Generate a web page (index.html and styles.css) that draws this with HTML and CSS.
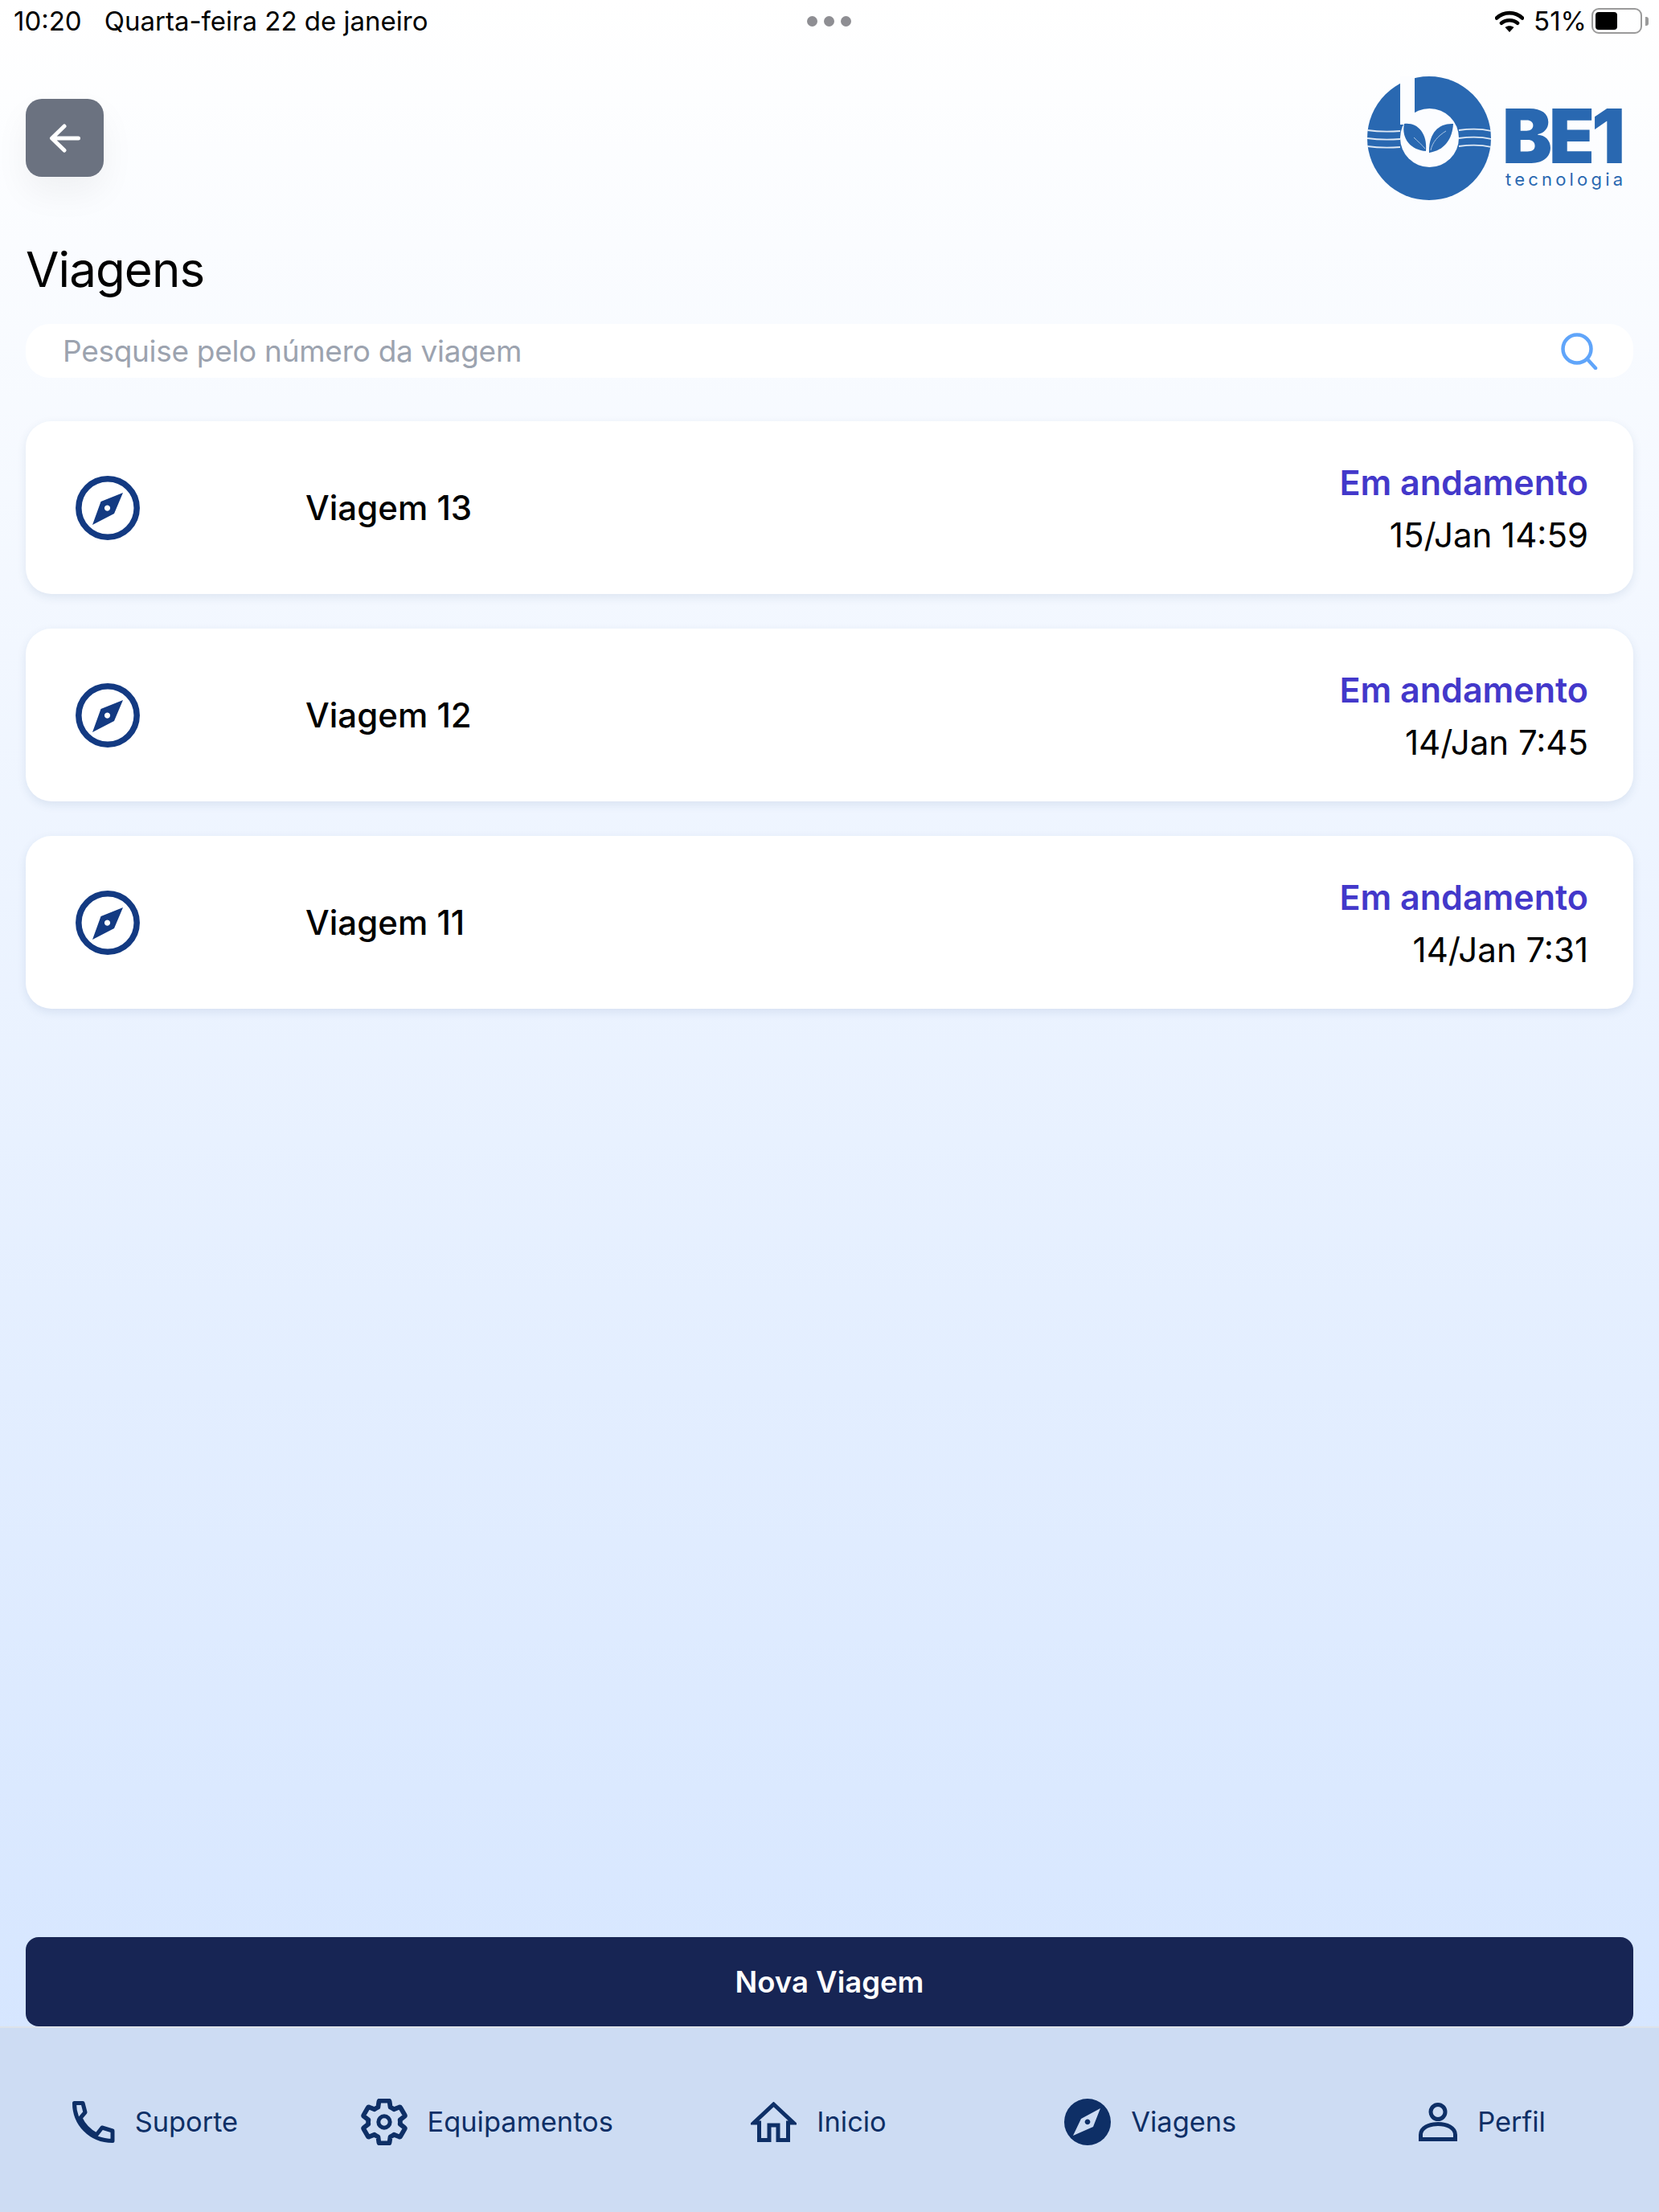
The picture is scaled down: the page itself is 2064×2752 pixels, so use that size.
FILE: index.html
```html
<!DOCTYPE html>
<html lang="pt-BR">
<head>
  <meta charset="UTF-8" />
  <title>Viagens</title>
  <link rel="stylesheet" href="styles.css">
</head>
<body>
  <div class="app">

    <div class="status-bar">
      <div class="status-left">
        <span>10:20</span>
        <span>Quarta-feira 22 de janeiro</span>
      </div>
      <div class="status-dots"><i></i><i></i><i></i></div>
      <div class="status-right">
        <svg class="wifi" viewBox="0 0 36 27">
          <path d="M2 9.5C11 1 25 1 34 9.5M8 15.8C13.5 11 22.5 11 28 15.8" fill="none" stroke="#000" stroke-width="4.6" stroke-linecap="round"/>
          <path d="M12.5 21C15.5 18.6 20.5 18.6 23.5 21L18 27Z" fill="#000"/>
        </svg>
        <span class="percent">51%</span>
        <div class="battery"><div class="battery-level"></div></div>
        <div class="battery-nub"></div>
      </div>
    </div>

    <header class="top">
      <button class="back-btn">
        <svg viewBox="0 0 40 36" width="40" height="36">
          <path d="M36.5 18H4M19 3L3.5 18L19 33" fill="none" stroke="#fff" stroke-width="5" stroke-linecap="round" stroke-linejoin="round"/>
        </svg>
      </button>
      <div class="logo">
        <svg class="logo-mark" viewBox="0 0 154 154">
          <circle cx="77" cy="77" r="77" fill="#2968b1"/>
          <path d="M0 67C14 69 28 69 41 68M0 77C14 79 28 79 41 78M0 87C14 89 28 89 41 88M114 67C128 65 142 65 154 68M114 77C128 75 142 75 154 78M114 87C128 85 142 85 154 88" fill="none" stroke="#dfe9f5" stroke-width="1.8"/>
          <rect x="41" y="0" width="18" height="60" fill="#fcfdff"/>
          <circle cx="77.5" cy="76.5" r="36.5" fill="#fcfdff"/>
          <path d="M46 59C62 57 75 70 73 93C55 92 42 78 46 59Z" fill="#2968b1"/>
          <path d="M107 59C88 58 76 72 77 95C96 92 106 78 107 59Z" fill="#2968b1"/>
          <path d="M58 76C63 81 68 85 72 90M98 68C88 74 81 82 79 92" fill="none" stroke="#a9c5e4" stroke-width="1"/>
        </svg>
        <div class="logo-text">
          <div class="logo-name">BE1</div>
          <div class="logo-sub">tecnologia</div>
        </div>
      </div>
    </header>

    <h1 class="title">Viagens</h1>

    <div class="search">
      <span class="search-text">Pesquise pelo número da viagem</span>
      <svg viewBox="0 0 46 46" width="46" height="46">
        <circle cx="20" cy="20" r="17.5" fill="none" stroke="#60a5fa" stroke-width="4.5"/>
        <path d="M33 33L43 44" fill="none" stroke="#60a5fa" stroke-width="4.5" stroke-linecap="round"/>
      </svg>
    </div>

    <main class="trip-list">
      <div class="trip-card">
        <svg class="trip-icon" viewBox="0 0 80 80">
          <circle cx="40" cy="40" r="36.2" fill="none" stroke="#133a82" stroke-width="7.5"/>
          <path fill-rule="evenodd" d="M59 21L31.5 32L21 61L48 47ZM39.5 36.5a3.6 3.6 0 1 0 0.01 0Z" fill="#133a82"/>
        </svg>
        <div class="trip-name">Viagem 13</div>
        <div class="trip-meta">
          <div class="trip-status">Em andamento</div>
          <div class="trip-date">15/Jan 14:59</div>
        </div>
      </div>
      <div class="trip-card">
        <svg class="trip-icon" viewBox="0 0 80 80">
          <circle cx="40" cy="40" r="36.2" fill="none" stroke="#133a82" stroke-width="7.5"/>
          <path fill-rule="evenodd" d="M59 21L31.5 32L21 61L48 47ZM39.5 36.5a3.6 3.6 0 1 0 0.01 0Z" fill="#133a82"/>
        </svg>
        <div class="trip-name">Viagem 12</div>
        <div class="trip-meta">
          <div class="trip-status">Em andamento</div>
          <div class="trip-date">14/Jan 7:45</div>
        </div>
      </div>
      <div class="trip-card">
        <svg class="trip-icon" viewBox="0 0 80 80">
          <circle cx="40" cy="40" r="36.2" fill="none" stroke="#133a82" stroke-width="7.5"/>
          <path fill-rule="evenodd" d="M59 21L31.5 32L21 61L48 47ZM39.5 36.5a3.6 3.6 0 1 0 0.01 0Z" fill="#133a82"/>
        </svg>
        <div class="trip-name">Viagem 11</div>
        <div class="trip-meta">
          <div class="trip-status">Em andamento</div>
          <div class="trip-date">14/Jan 7:31</div>
        </div>
      </div>
    </main>

    <button class="new-trip">Nova Viagem</button>

    <nav class="tabs">
      <a class="tab">
        <svg viewBox="0 0 53 52" width="53" height="52">
          <path d="M2.5 2.5H13L16 14L10 21C14 30 21 37 30 42L37 33L50 37V49.5C22 49.5 2.5 28 2.5 2.5Z" fill="none" stroke="#0e2f66" stroke-width="5" stroke-linejoin="round"/>
        </svg>
        <span>Suporte</span>
      </a>
      <a class="tab">
        <svg viewBox="1.5 1.5 21 21" width="58" height="58">
          <path d="M19.14,12.94c0.04-0.3,0.06-0.61,0.06-0.94c0-0.32-0.02-0.64-0.07-0.94l2.03-1.58c0.18-0.14,0.23-0.41,0.12-0.61l-1.92-3.32c-0.12-0.22-0.37-0.29-0.59-0.22l-2.39,0.96c-0.5-0.38-1.03-0.7-1.62-0.94L14.4,2.81c-0.04-0.24-0.24-0.41-0.48-0.41h-3.84c-0.24,0-0.43,0.17-0.47,0.41L9.25,5.35C8.66,5.59,8.12,5.92,7.63,6.29L5.24,5.33c-0.22-0.08-0.47,0-0.59,0.22L2.74,8.87C2.62,9.08,2.66,9.34,2.86,9.48l2.03,1.58C4.84,11.36,4.8,11.69,4.8,12s0.02,0.64,0.07,0.94l-2.03,1.58c-0.18,0.14-0.23,0.41-0.12,0.61l1.92,3.32c0.12,0.22,0.37,0.29,0.59,0.22l2.39-0.96c0.5,0.38,1.03,0.7,1.62,0.94l0.36,2.54c0.05,0.24,0.24,0.41,0.48,0.41h3.84c0.24,0,0.44-0.17,0.47-0.41l0.36-2.54c0.59-0.24,1.13-0.56,1.62-0.94l2.39,0.96c0.22,0.08,0.47,0,0.59-0.22l1.92-3.32c0.12-0.22,0.07-0.47-0.12-0.61L19.14,12.94z" fill="none" stroke="#0e2f66" stroke-width="2.1" stroke-linejoin="round"/>
          <circle cx="12" cy="12" r="2.6" fill="none" stroke="#0e2f66" stroke-width="1.8"/>
        </svg>
        <span>Equipamentos</span>
      </a>
      <a class="tab">
        <svg viewBox="0 0 57 50" width="57" height="50">
          <path d="M28.5 3L53 26H46.5V47.5H34V29H23V47.5H10.5V26H4Z" fill="none" stroke="#0e2f66" stroke-width="5"/>
        </svg>
        <span>Inicio</span>
      </a>
      <a class="tab">
        <svg viewBox="0 0 58 58" width="58" height="58">
          <circle cx="29" cy="29" r="29" fill="#0e2f66"/>
          <path fill-rule="evenodd" d="M45 12L21 25L11 46L36 35ZM29 25.5a3.4 3.4 0 1 0 0.01 0Z" fill="#cddcf3"/>
        </svg>
        <span>Viagens</span>
      </a>
      <a class="tab">
        <svg viewBox="0 0 48 48" width="48" height="48">
          <circle cx="24" cy="11.5" r="9" fill="none" stroke="#0e2f66" stroke-width="5"/>
          <path d="M2.5 45.5V40C2.5 31 13 26.5 24 26.5S45.5 31 45.5 40V45.5Z" fill="none" stroke="#0e2f66" stroke-width="5"/>
        </svg>
        <span>Perfil</span>
      </a>
    </nav>

  </div>
</body>
</html>
```

FILE: styles.css
```css
* {
  box-sizing: border-box;
}

body {
  margin: 0;
  font-family: 'Inter', 'Liberation Sans', sans-serif;
  color: #000;
}

.app {
  width: 2064px;
  height: 2752px;
  display: flex;
  flex-direction: column;
  background: linear-gradient(to bottom, #ffffff, #d6e6ff 92%);
}

/* status bar */
.status-bar {
  height: 52px;
  padding: 0 13px 0 17px;
  display: flex;
  align-items: center;
  justify-content: space-between;
  position: relative;
  font-size: 33px;
}

.status-left {
  display: flex;
  gap: 28px;
}

.status-dots {
  position: absolute;
  left: 1004px;
  top: 20px;
  display: flex;
  gap: 8px;
}

.status-dots i {
  width: 13px;
  height: 13px;
  border-radius: 50%;
  background: #8e8e93;
}

.status-right {
  display: flex;
  align-items: center;
}

.wifi {
  width: 36px;
  height: 27px;
  margin-right: 12px;
}

.percent {
  margin-right: 6px;
}

.battery {
  width: 63px;
  height: 32px;
  padding: 3px;
  border: 2px solid #9a9a9a;
  border-radius: 9px;
}

.battery-level {
  width: 27px;
  height: 100%;
  background: #000;
  border-radius: 4px;
}

.battery-nub {
  width: 4px;
  height: 11px;
  margin-left: 4px;
  background: #9a9a9a;
  border-radius: 0 3px 3px 0;
}

/* header */
.top {
  margin-top: 43px;
  padding: 0 45px 0 32px;
  display: flex;
  justify-content: space-between;
  align-items: flex-start;
}

.back-btn {
  width: 97px;
  height: 97px;
  margin-top: 28px;
  padding: 0;
  display: flex;
  align-items: center;
  justify-content: center;
  background: #6b7280;
  border: none;
  border-radius: 20px;
  box-shadow: 0 20px 44px rgba(0, 0, 0, 0.05);
}

.logo {
  display: flex;
  gap: 18px;
}

.logo-mark {
  width: 154px;
  height: 154px;
}

.logo-text {
  width: 146px;
  padding-top: 32px;
  color: #2968b1;
}

.logo-name {
  margin-left: -4px;
  font-size: 93px;
  font-weight: 900;
  line-height: 84px;
  letter-spacing: -4px;
}

.logo-sub {
  font-size: 22px;
  line-height: 24px;
  letter-spacing: 4.2px;
  white-space: nowrap;
}

.title {
  margin: 50px 0 0 32px;
  font-size: 60px;
  font-weight: 400;
  line-height: 72px;
  letter-spacing: -0.9px;
}

.search {
  margin: 32px 32px 0;
  height: 67px;
  padding: 0 44px 0 46px;
  display: flex;
  align-items: center;
  justify-content: space-between;
  background: #fff;
  border-radius: 30px;
}

.search-text {
  font-size: 37px;
  letter-spacing: -0.3px;
  color: #9ca3af;
}

/* trips */
.trip-list {
  flex: 1;
  margin: 54px 32px 0;
  display: flex;
  flex-direction: column;
  gap: 43px;
}

.trip-card {
  height: 215px;
  padding: 0 56px 0 62px;
  display: flex;
  align-items: center;
  background: #fff;
  border-radius: 32px;
  box-shadow: 0 4px 12px rgba(30, 64, 120, 0.1);
}

.trip-icon {
  width: 80px;
  height: 80px;
}

.trip-name {
  margin-left: 206px;
  flex: 1;
  font-size: 42px;
  font-weight: 500;
}

.trip-meta {
  text-align: right;
  font-size: 42px;
  line-height: 64px;
}

.trip-status {
  font-size: 43px;
  font-weight: 600;
  color: #4338ca;
}

.trip-date {
  padding-top: 2px;
  margin-bottom: -2px;
}

.new-trip {
  margin: 0 32px;
  height: 111px;
  flex-shrink: 0;
  background: #172554;
  color: #fff;
  border: none;
  border-radius: 16px;
  font-family: inherit;
  font-size: 36.5px;
  font-weight: 600;
}

/* bottom tabs */
.tabs {
  height: 231px;
  flex-shrink: 0;
  padding-top: 4px;
  display: flex;
  background: #cddcf3;
  border-top: 2px solid #dde3ea;
}

.tab {
  flex: 1;
  padding-right: 27px;
  display: flex;
  align-items: center;
  justify-content: center;
  gap: 25px;
  color: #0e2f66;
  font-size: 34.4px;
}
```
